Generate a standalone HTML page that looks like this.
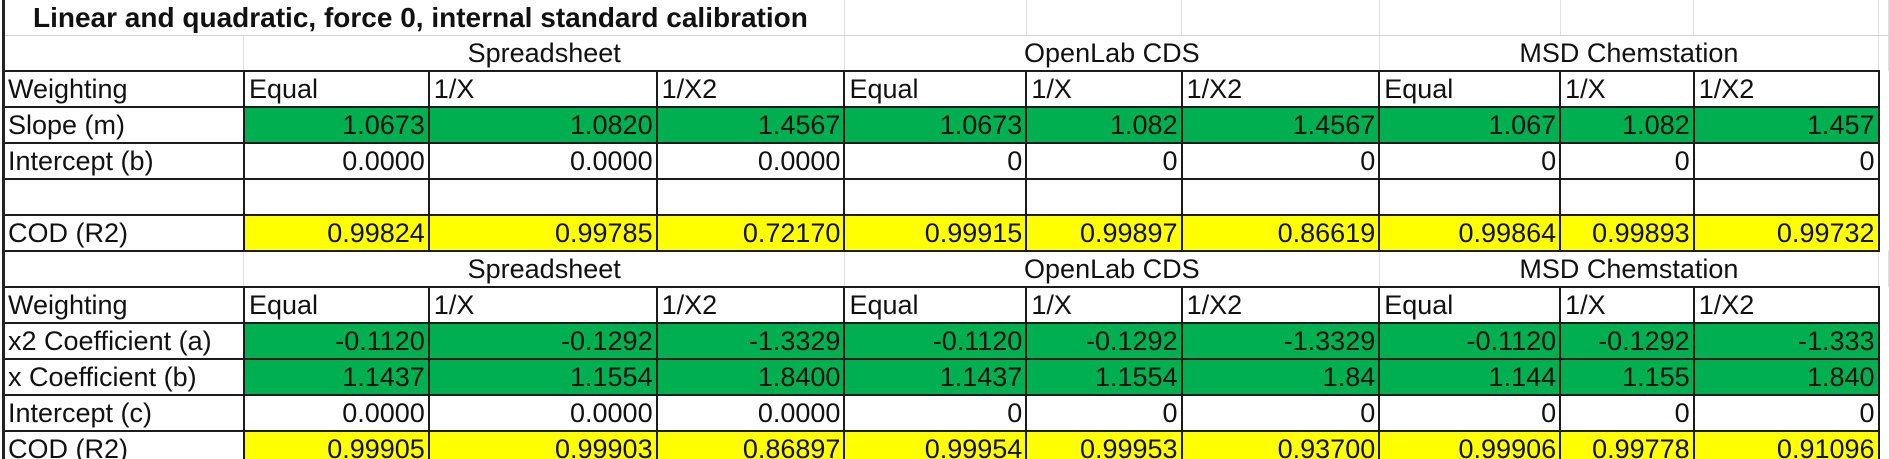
<!DOCTYPE html>
<html><head><meta charset="utf-8"><style>
html,body{margin:0;padding:0;background:#fff;width:1889px;height:459px;overflow:hidden}
body{position:relative;font-family:"Liberation Sans",Arial,sans-serif;color:#111}
table{position:absolute;left:2px;top:0;border-collapse:collapse;table-layout:fixed;font-size:27px}
td{padding:0;white-space:nowrap;overflow:hidden;line-height:30px}
tr.t td{height:35px;border-bottom:1px solid #d4d4d4;border-right:1px solid #e0e0e0}
tr.h td{height:34px;border-right:1px solid #e0e0e0}
tr.r td{height:34px;border:2px solid #1c1c1c}
td.l{padding-left:4px}
td.n{text-align:right;padding-right:3px}
.g{background:#00b050}
.y{background:#ffff00}
td.c{text-align:center}
.lb{position:absolute;left:2px;top:0;width:3px;height:459px;background:#222}
</style></head><body>
<table>
<colgroup><col style="width:241px"><col style="width:185px"><col style="width:228px"><col style="width:188px"><col style="width:183px"><col style="width:156px"><col style="width:199px"><col style="width:182px"><col style="width:134px"><col style="width:186px"><col style="width:10px"></colgroup>
<tr class="t"><td colspan="4" style="font-weight:bold;padding-left:30px;font-size:28px;overflow:visible">Linear and quadratic, force 0, internal standard calibration</td><td></td><td></td><td></td><td></td><td></td><td></td><td></td></tr>
<tr class="h"><td></td><td colspan="3" class="c">Spreadsheet</td><td colspan="3" class="c">OpenLab CDS</td><td colspan="3" class="c">MSD Chemstation</td><td></td></tr>
<tr class="r"><td class="l">Weighting</td><td class="l">Equal</td><td class="l">1/X</td><td class="l">1/X2</td><td class="l">Equal</td><td class="l">1/X</td><td class="l">1/X2</td><td class="l">Equal</td><td class="l">1/X</td><td class="l">1/X2</td><td style="border:none"></td></tr>
<tr class="r"><td class="l">Slope (m)</td><td class="n g">1.0673</td><td class="n g">1.0820</td><td class="n g">1.4567</td><td class="n g">1.0673</td><td class="n g">1.082</td><td class="n g">1.4567</td><td class="n g">1.067</td><td class="n g">1.082</td><td class="n g">1.457</td><td style="border:none"></td></tr>
<tr class="r"><td class="l">Intercept (b)</td><td class="n">0.0000</td><td class="n">0.0000</td><td class="n">0.0000</td><td class="n">0</td><td class="n">0</td><td class="n">0</td><td class="n">0</td><td class="n">0</td><td class="n">0</td><td style="border:none"></td></tr>
<tr class="r"><td></td><td></td><td></td><td></td><td></td><td></td><td></td><td></td><td></td><td></td><td style="border:none"></td></tr>
<tr class="r"><td class="l">COD (R2)</td><td class="n y">0.99824</td><td class="n y">0.99785</td><td class="n y">0.72170</td><td class="n y">0.99915</td><td class="n y">0.99897</td><td class="n y">0.86619</td><td class="n y">0.99864</td><td class="n y">0.99893</td><td class="n y">0.99732</td><td style="border:none"></td></tr>
<tr class="h"><td></td><td colspan="3" class="c">Spreadsheet</td><td colspan="3" class="c">OpenLab CDS</td><td colspan="3" class="c">MSD Chemstation</td><td></td></tr>
<tr class="r"><td class="l">Weighting</td><td class="l">Equal</td><td class="l">1/X</td><td class="l">1/X2</td><td class="l">Equal</td><td class="l">1/X</td><td class="l">1/X2</td><td class="l">Equal</td><td class="l">1/X</td><td class="l">1/X2</td><td style="border:none"></td></tr>
<tr class="r"><td class="l">x2 Coefficient (a)</td><td class="n g">-0.1120</td><td class="n g">-0.1292</td><td class="n g">-1.3329</td><td class="n g">-0.1120</td><td class="n g">-0.1292</td><td class="n g">-1.3329</td><td class="n g">-0.1120</td><td class="n g">-0.1292</td><td class="n g">-1.333</td><td style="border:none"></td></tr>
<tr class="r"><td class="l">x Coefficient (b)</td><td class="n g">1.1437</td><td class="n g">1.1554</td><td class="n g">1.8400</td><td class="n g">1.1437</td><td class="n g">1.1554</td><td class="n g">1.84</td><td class="n g">1.144</td><td class="n g">1.155</td><td class="n g">1.840</td><td style="border:none"></td></tr>
<tr class="r"><td class="l">Intercept (c)</td><td class="n">0.0000</td><td class="n">0.0000</td><td class="n">0.0000</td><td class="n">0</td><td class="n">0</td><td class="n">0</td><td class="n">0</td><td class="n">0</td><td class="n">0</td><td style="border:none"></td></tr>
<tr class="r"><td class="l">COD (R2)</td><td class="n y">0.99905</td><td class="n y">0.99903</td><td class="n y">0.86897</td><td class="n y">0.99954</td><td class="n y">0.99953</td><td class="n y">0.93700</td><td class="n y">0.99906</td><td class="n y">0.99778</td><td class="n y">0.91096</td><td style="border:none"></td></tr>
</table>
<div class="lb"></div>
</body></html>
